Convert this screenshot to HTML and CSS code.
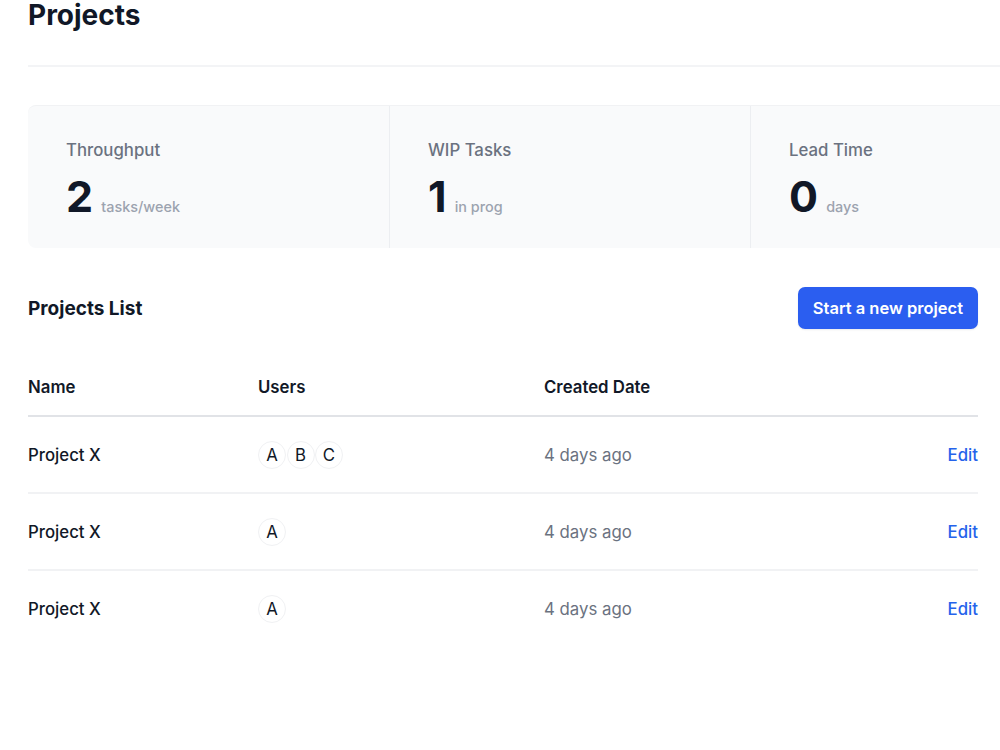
FILE: index.html
```html
<!DOCTYPE html>
<html lang="en">
<head>
  <meta charset="UTF-8">
  <meta name="viewport" content="width=device-width, initial-scale=1.0">
  <title>Projects</title>
  <link rel="stylesheet" href="styles.css">
</head>
<body>
  <div class="page">
    <header class="page-header">
      <h1>Projects</h1>
    </header>

    <div class="stats">
      <div class="stat">
        <p class="stat-label">Throughput</p>
        <p class="stat-value">2 <span>tasks/week</span></p>
      </div>
      <div class="stat">
        <p class="stat-label">WIP Tasks</p>
        <p class="stat-value">1 <span>in prog</span></p>
      </div>
      <div class="stat">
        <p class="stat-label">Lead Time</p>
        <p class="stat-value">0 <span>days</span></p>
      </div>
    </div>

    <section class="projects">
      <div class="projects-head">
        <h2>Projects List</h2>
        <button type="button">Start a new project</button>
      </div>

      <table class="projects-table">
        <thead>
          <tr>
            <th class="col-name">Name</th>
            <th class="col-users">Users</th>
            <th>Created Date</th>
            <th></th>
          </tr>
        </thead>
        <tbody>
          <tr>
            <td class="name">Project X</td>
            <td>
              <div class="avatars">
                <span class="avatar">A</span>
                <span class="avatar">B</span>
                <span class="avatar">C</span>
              </div>
            </td>
            <td class="date">4 days ago</td>
            <td class="actions"><a href="#">Edit</a></td>
          </tr>
          <tr>
            <td class="name">Project X</td>
            <td>
              <div class="avatars">
                <span class="avatar">A</span>
              </div>
            </td>
            <td class="date">4 days ago</td>
            <td class="actions"><a href="#">Edit</a></td>
          </tr>
          <tr>
            <td class="name">Project X</td>
            <td>
              <div class="avatars">
                <span class="avatar">A</span>
              </div>
            </td>
            <td class="date">4 days ago</td>
            <td class="actions"><a href="#">Edit</a></td>
          </tr>
        </tbody>
      </table>
    </section>
  </div>
</body>
</html>
```

FILE: styles.css
```css
html, body {
  margin: 0;
  overflow-x: hidden;
}
body {
  font-family: Inter, "Noto Sans", Arial, sans-serif;
  color: #111827;
  background: #fff;
}
p, h1, h2 {
  margin: 0;
}
.page {
  padding: 0 0 0 28px;
}
.page-header {
  width: 1100px;
  border-bottom: 2px solid #f3f4f6;
  padding-bottom: 32px;
}
h1 {
  font-size: 28px;
  font-weight: 700;
  line-height: 36px;
  margin-top: -3px;
}
.stats {
  display: grid;
  grid-template-columns: repeat(3, 361px);
  width: 1083px;
  margin-top: 38px;
  background: #f9fafb;
  border-top: 1px solid #f1f2f4;
  border-radius: 8px 0 0 8px;
}
.stat {
  padding: 32px 38px 17px;
  border-left: 1px solid #eceef1;
}
.stat:first-child {
  border-left: none;
}
.stat-label {
  font-size: 16.8px;
  line-height: 24px;
  color: #6b7280;
  font-weight: 500;
}
.stat-value {
  margin-top: 10px;
  font-size: 43px;
  font-weight: 700;
  line-height: 48px;
  color: #111827;
}
.stat-value span {
  font-size: 14.4px;
  font-weight: 500;
  color: #9ca3af;
  margin-left: -2px;
}
.projects {
  width: 950px;
}
.projects-head {
  display: flex;
  justify-content: space-between;
  align-items: center;
  margin-top: 39px;
}
h2 {
  font-size: 19px;
  font-weight: 700;
}
.projects-head button {
  font-family: inherit;
  font-size: 16.5px;
  font-weight: 600;
  color: #fff;
  background: #2b5ef0;
  border: none;
  border-radius: 7px;
  height: 42px;
  padding: 0 15px;
  box-shadow: 0 1px 2px rgba(0,0,0,0.08);
}
.projects-table {
  width: 100%;
  border-collapse: collapse;
  margin-top: 48px;
}
.projects-table th {
  text-align: left;
  font-size: 16.8px;
  font-weight: 600;
  padding: 0 0 18px;
  border-bottom: 2px solid #e1e3e7;
}
.col-name {
  width: 230px;
}
.col-users {
  width: 286px;
}
.projects-table td {
  font-size: 16.8px;
  height: 75px;
  padding: 0;
  border-bottom: 2px solid #f1f2f4;
}
.projects-table tr:last-child td {
  border-bottom: none;
}
.name {
  font-weight: 500;
}
.date {
  color: #6b7280;
}
.actions {
  text-align: right;
}
.actions a {
  color: #2563eb;
  text-decoration: none;
  font-weight: 500;
}
.avatars {
  display: flex;
}
.avatar {
  width: 26px;
  height: 26px;
  border: 1px solid #f0f1f3;
  border-radius: 50%;
  display: flex;
  align-items: center;
  justify-content: center;
  font-size: 16.8px;
  background: #fff;
  margin-right: 0.5px;
}
```
